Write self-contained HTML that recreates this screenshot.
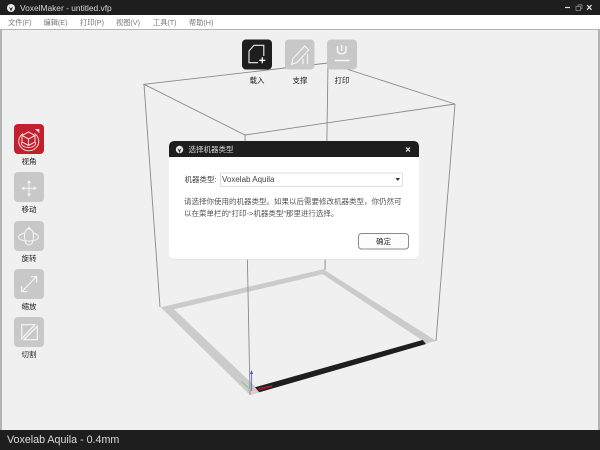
<!DOCTYPE html>
<html lang="zh">
<head>
<meta charset="utf-8">
<title>VoxelMaker</title>
<style>
html,body{margin:0;padding:0;width:600px;height:450px;overflow:hidden;background:#f0f0f0;font-family:"Liberation Sans","Noto Sans CJK SC",sans-serif}
#w{position:absolute;left:0;top:0;width:600px;height:450px;overflow:hidden;filter:blur(.35px)}
.t{position:absolute;white-space:nowrap;line-height:1}
svg{position:absolute;left:0;top:0}
.lab{font-size:7.500px;color:#222;width:40px;text-align:center}
.m{font-size:7.200px;color:#777;top:18.500px}
</style>
</head>
<body>
<div id="w">
<svg width="600" height="450" viewBox="0 0 600 450">
  <rect width="600" height="450" fill="#f0f0f0"/>
  <!-- floor frame -->
  <path fill-rule="evenodd" fill="#cbcbcb" d="M160.7 307.3L323.3 269.3L436 340.7L250 395ZM174 309.3L256.7 388L421.7 340L322.7 274.3Z"/>
  <path fill="#1e1e1e" d="M255 387.3L422.7 340L426 344L259.3 392.3Z"/>
  <path fill="#8f1f28" d="M258 388L272 385L272.5 387L259 390.5Z"/>
  <path fill="#f3c5c5" d="M251 391L258 390.5L255 394L251 394Z"/>
  <!-- wire box -->
  <g stroke="#8a8a8a" stroke-width="0.9" fill="none">
    <path d="M144 84.300L328 63L455 104L245 135L144 84.300Z"/>
    <path d="M144 84.300L160 307"/>
    <path d="M455 104L436 341"/>
    <path d="M328 63L325 270"/>
    <path d="M245 135L250 395"/>
  </g>
  <path d="M251.500 372V391" stroke="#7a7ae0" stroke-width="1.2"/>
  <path d="M251.500 370L250 374H253Z" fill="#4a4ad0"/>
  <path d="M241.500 381.500L250.500 390" stroke="#7fd07f" stroke-width="1.2"/>
  <!-- top toolbar -->
  <rect x="242" y="39.500" width="30" height="30" rx="4" fill="#1e1e1e"/>
  <path d="M258 62.700H249V51L254 45.300H263.800V56" fill="none" stroke="#eee" stroke-width="1.100"/>
  <path d="M262.300 57.300V63.300M259.300 60.300H265.300" stroke="#fff" stroke-width="1.300"/>
  <rect x="285" y="39.500" width="29.500" height="30" rx="4" fill="#c8c8c8"/>
  <path d="M291.700 64.300L293 58.500L304.700 46L308.700 50L297 62.500Z" fill="none" stroke="#f4f4f4" stroke-width="1.200"/>
  <path d="M303 64.300V58.500M307.500 64.300V54" stroke="#f4f4f4" stroke-width="1.200"/>
  <rect x="327" y="39.500" width="30" height="30" rx="4" fill="#c8c8c8"/>
  <path d="M337.500 46V50.500Q337.500 53.800 341.700 53.800Q346 53.800 346 50.500V46" fill="none" stroke="#f6f6f6" stroke-width="1.500"/>
  <path d="M341.700 45V51" stroke="#f6f6f6" stroke-width="1.500"/>
  <path d="M334.700 60.500H349.500" stroke="#f6f6f6" stroke-width="1.600"/>
  <!-- left toolbar -->
  <rect x="14" y="124" width="30" height="30" rx="4" fill="#c2202f"/>
  <path d="M35 129H39.300V133.300Z" fill="#f6dcdc"/>
  <path d="M23 133.500A10 9.500 0 1 0 34.500 133.500" fill="none" stroke="#f6dcdc" stroke-width="1"/>
  <ellipse cx="28.500" cy="143.500" rx="7" ry="4" fill="none" stroke="#f6dcdc" stroke-width="0.900"/>
  <path d="M28.500 132L35 135.500V142L28.500 145.500L22 142V135.500ZM22 135.500L28.500 139L35 135.500M28.500 139V145.500" fill="#c2202f" stroke="#f6dcdc" stroke-width="1"/>
  <rect x="14" y="172" width="30" height="30" rx="4" fill="#c8c8c8"/>
  <path d="M29 181V196M22 188.300H36" stroke="#f4f4f4" stroke-width="1"/>
  <path d="M29 180L27 183H31ZM29 196.700L27 193.700H31ZM21.300 188.300L24.300 186.300V190.300ZM36.800 188.300L33.800 186.300V190.300Z" fill="#f4f4f4"/>
  <rect x="14" y="221" width="30" height="30" rx="4" fill="#c8c8c8"/>
  <path d="M24.500 233C20.500 234 18.500 235.500 18.500 237C18.500 239.500 23 241 28.500 241C34 241 38.500 239.500 38.500 237C38.500 235.500 36.500 234 33 233" fill="none" stroke="#f4f4f4" stroke-width="1"/>
  <path d="M29 229C26 229 24.500 232 24.500 236.500C24.500 241 26 245 29 245C32 245 33.500 241 33.500 236.500C33.500 232 32 229 29 229Z" fill="none" stroke="#f4f4f4" stroke-width="1"/>
  <path d="M29 226.500L26.500 229.500H31.500Z" fill="#f4f4f4"/>
  <rect x="14" y="269" width="30" height="30" rx="4" fill="#c8c8c8"/>
  <path d="M22.500 291L36 277" stroke="#f6f6f6" stroke-width="1.200"/>
  <path d="M21.700 286V291.700H27.500M31 276.700H36.700V282.500" fill="none" stroke="#f6f6f6" stroke-width="1.200"/>
  <rect x="14" y="317" width="30" height="30" rx="4" fill="#c8c8c8"/>
  <path d="M21.700 324.700H35L21.700 338.700Z" fill="none" stroke="#f6f6f6" stroke-width="1.200"/>
  <path d="M37.300 326.300V339.700H24Z" fill="none" stroke="#f6f6f6" stroke-width="1.200"/>
  <!-- chrome -->
  <rect x="0" y="0" width="600" height="15" fill="#1e1e1e"/>
  <rect x="0" y="15" width="600" height="14" fill="#fff"/>
  <rect x="0" y="29" width="600" height="1" fill="#b4b4b4"/>
  <rect x="0" y="29" width="2" height="401" fill="#b4b4b4"/>
  <rect x="598" y="29" width="2" height="401" fill="#b4b4b4"/>
  <rect x="0" y="430" width="600" height="20" fill="#1e1e1e"/>
  <!-- app logo -->
  <circle cx="11" cy="8" r="4" fill="#e8e8e8"/>
  <path d="M9 6.500L11 8.500L13 6.500L11 11.500Z" fill="#1e1e1e"/>
  <!-- window controls -->
  <path d="M565 7.500H570" stroke="#e0e0e0" stroke-width="1.200"/>
  <path d="M576 6.500H580.500V10.500H576ZM578 6V4.800H582V8.500H581" fill="none" stroke="#8f8f8f" stroke-width="0.800"/>
  <path d="M587 5L591.500 9.800M591.500 5L587 9.800" stroke="#e8e8e8" stroke-width="1.200"/>
  <!-- dialog -->
  <rect x="169" y="142" width="250" height="118" rx="5" fill="#dcdcdc" opacity="0.6"/>
  <rect x="169" y="141" width="250" height="118" rx="5" fill="#fff"/>
  <path d="M169 157V146A5 5 0 0 1 174 141H414A5 5 0 0 1 419 146V157Z" fill="#1e1e1e"/>
  <circle cx="179.500" cy="149.500" r="3.700" fill="#e8e8e8"/>
  <path d="M177.500 148L179.500 150L181.500 148L179.500 153Z" fill="#1e1e1e"/>
  <path d="M406 147.500L410 151.500M410 147.500L406 151.500" stroke="#eee" stroke-width="1.200"/>
  <rect x="220.500" y="173" width="182" height="13.500" rx="1.500" fill="#fff" stroke="#dedede" stroke-width="1"/>
  <path d="M395.500 178L400 178L397.750 181Z" fill="#333"/>
  <rect x="358.500" y="233.500" width="50" height="15.500" rx="3" fill="#fdfdfd" stroke="#8a8a8a" stroke-width="1"/>
</svg>

<div class="t" style="left:20px;top:3.500px;font-size:8.400px;color:#d8d8d8">VoxelMaker - untitled.vfp</div>
<div class="t m" style="left:8px">文件(F)</div>
<div class="t m" style="left:43.500px">编辑(E)</div>
<div class="t m" style="left:80px">打印(P)</div>
<div class="t m" style="left:116px">视图(V)</div>
<div class="t m" style="left:153px">工具(T)</div>
<div class="t m" style="left:189px">帮助(H)</div>

<div class="t lab" style="left:237px;top:76.500px">载入</div>
<div class="t lab" style="left:280px;top:76.500px">支撑</div>
<div class="t lab" style="left:322px;top:76.500px">打印</div>

<div class="t lab" style="left:9px;top:158px">视角</div>
<div class="t lab" style="left:9px;top:206px">移动</div>
<div class="t lab" style="left:9px;top:254.500px">旋转</div>
<div class="t lab" style="left:9px;top:302.500px">缩放</div>
<div class="t lab" style="left:9px;top:351px">切割</div>

<div class="t" style="left:188.500px;top:145.500px;font-size:7.500px;color:#d8d8d8">选择机器类型</div>
<div class="t" style="left:184.500px;top:176px;font-size:7.500px;color:#444">机器类型:</div>
<div class="t" style="left:222px;top:175.500px;font-size:8px;color:#444">Voxelab Aquila</div>
<div class="t" style="left:184px;top:197.500px;font-size:7.500px;color:#555">请选择你使用的机器类型。如果以后需要修改机器类型，你仍然可</div>
<div class="t" style="left:184px;top:209.500px;font-size:7.500px;color:#555">以在菜单栏的“打印-&gt;机器类型”那里进行选择。</div>
<div class="t" style="left:358px;top:237.500px;width:51px;text-align:center;font-size:7.500px;color:#333">确定</div>

<div class="t" style="left:7px;top:434.500px;font-size:10.700px;color:#dcdcdc">Voxelab Aquila - 0.4mm</div>
</div>
</body>
</html>
